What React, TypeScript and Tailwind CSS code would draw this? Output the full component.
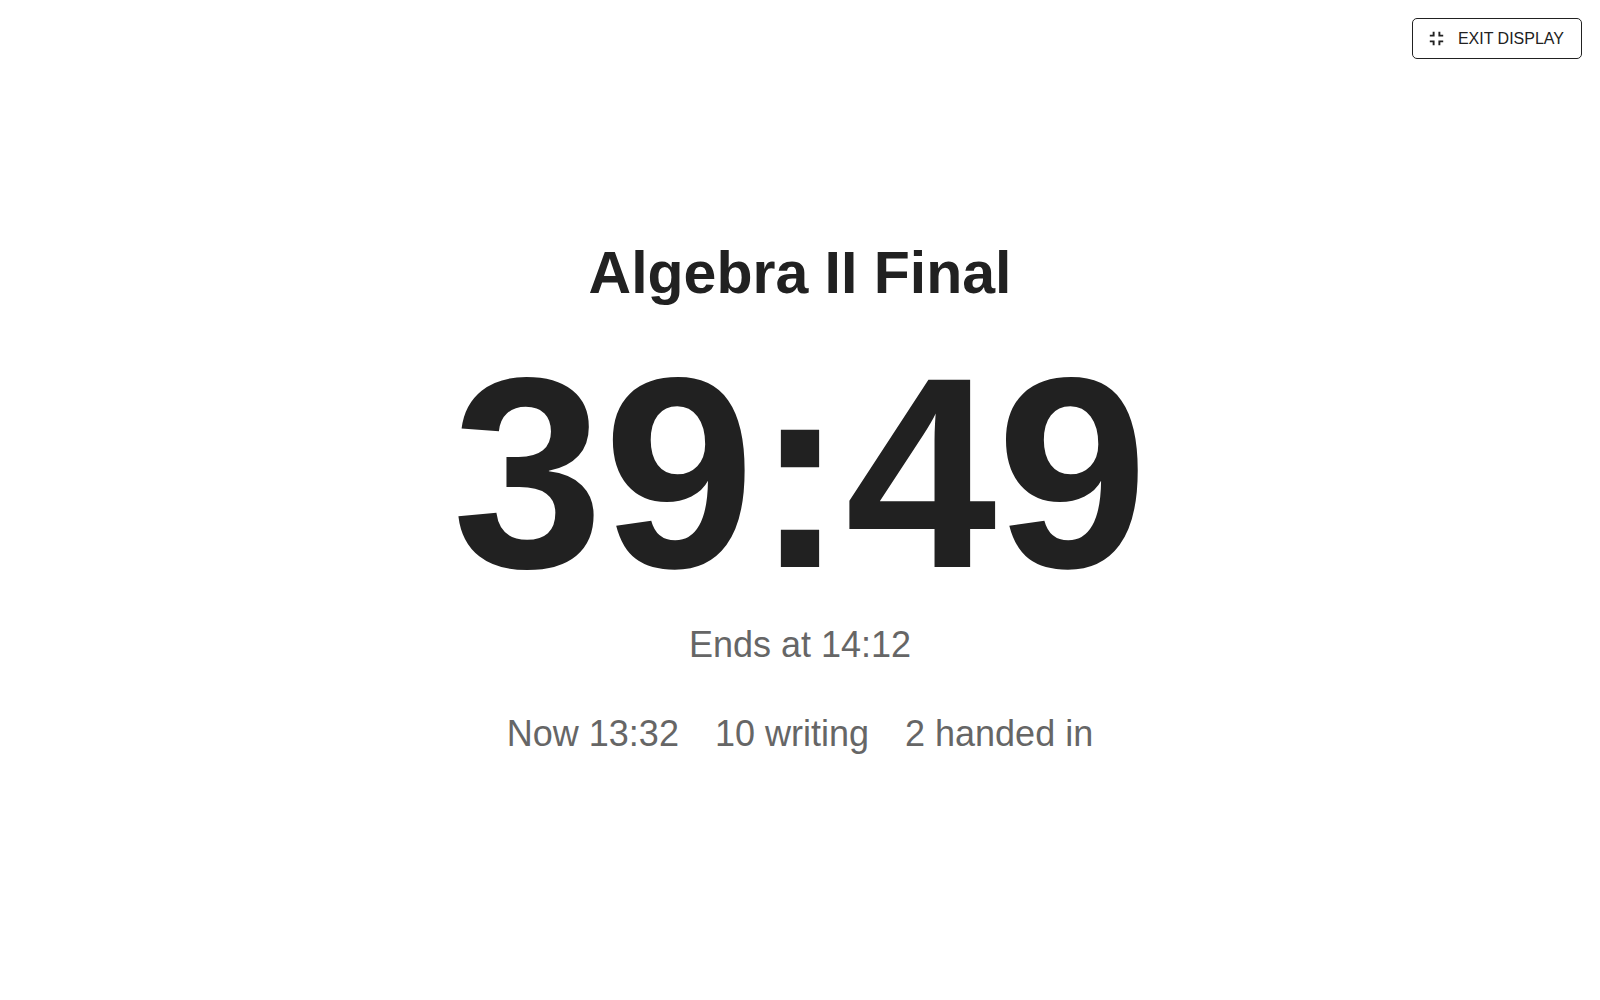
import type { FC } from 'react';
import { MdFullscreenExit } from 'react-icons/md';

interface ExamSession {
  title: string;
  remaining: string;
  endsAt: string;
  now: string;
  writing: number;
  handedIn: number;
}

const session: ExamSession = {
  title: 'Algebra II Final',
  remaining: '39:49',
  endsAt: '14:12',
  now: '13:32',
  writing: 10,
  handedIn: 2,
};

const ExitButton: FC = () => (
  <button
    type="button"
    className="flex items-center gap-[10px] pl-3 pr-[17px] py-2 border border-[#212121] rounded-[5px] text-[16px] leading-[23px] text-[#212121] uppercase cursor-pointer"
  >
    <MdFullscreenExit className="w-[23px] h-[23px]" aria-hidden="true" />
    Exit display
  </button>
);

const App: FC = () => (
  <div className="min-h-screen flex flex-col bg-white text-[#212121] font-['Liberation_Sans',Arial,sans-serif]">
    {/* floats over the display so the timer stays centered */}
    <header className="absolute top-0 right-0 p-[18px]">
      <ExitButton />
    </header>

    <main className="flex-1 flex flex-col items-center justify-center pb-2 text-center">
      <h1 className="text-[59px] leading-[72px] font-bold">{session.title}</h1>
      <div className="mt-7 text-[272px] leading-[272px] font-bold tabular-nums" role="timer">
        {session.remaining}
      </div>
      <p className="mt-[14px] text-[36px] leading-[44px] text-[#666666]">Ends at {session.endsAt}</p>
      <div className="mt-[45px] flex flex-wrap justify-center gap-9 text-[36px] leading-[44px] text-[#666666]">
        <span>Now {session.now}</span>
        <span>{session.writing} writing</span>
        <span>{session.handedIn} handed in</span>
      </div>
    </main>
  </div>
);

export default App;
